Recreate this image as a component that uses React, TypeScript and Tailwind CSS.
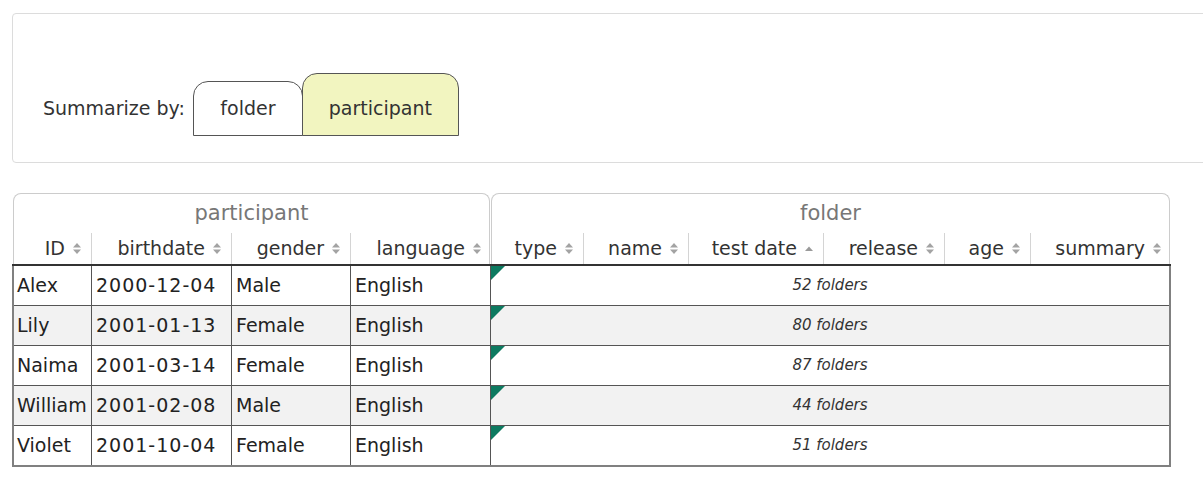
import React from 'react';

type Row = { id: string; birthdate: string; gender: string; language: string; folders: number };

const rows: Row[] = [
  { id: 'Alex', birthdate: '2000-12-04', gender: 'Male', language: 'English', folders: 52 },
  { id: 'Lily', birthdate: '2001-01-13', gender: 'Female', language: 'English', folders: 80 },
  { id: 'Naima', birthdate: '2001-03-14', gender: 'Female', language: 'English', folders: 87 },
  { id: 'William', birthdate: '2001-02-08', gender: 'Male', language: 'English', folders: 44 },
  { id: 'Violet', birthdate: '2001-10-04', gender: 'Female', language: 'English', folders: 51 },
];

const SortIcon: React.FC<{ asc?: boolean }> = ({ asc }) =>
  asc ? (
    <svg width="8" height="10" viewBox="0 0 8 10" className="ml-[8px] shrink-0">
      <path d="M0 7 L4 2.5 L8 7 Z" fill="#9a9a9a" />
    </svg>
  ) : (
    <svg width="8" height="11" viewBox="0 0 8 11" className="ml-[8px] shrink-0">
      <path d="M0 4.5 L4 0 L8 4.5 Z" fill="#a3a3a3" />
      <path d="M0 6.5 L4 11 L8 6.5 Z" fill="#a3a3a3" />
    </svg>
  );

const HeadCell: React.FC<{ label: string; width: string; last?: boolean; asc?: boolean }> = ({
  label,
  width,
  last,
  asc,
}) => (
  <div
    className={`${width} h-full flex items-center justify-end ${last ? 'pr-[8px]' : 'pr-[10px] border-r border-[#d4d4d4]'}`}
  >
    <span>{label}</span>
    <SortIcon asc={asc} />
  </div>
);

export default function App() {
  return (
    <div
      className="w-[1203px] h-[503px] overflow-hidden bg-white text-[#333]"
      style={{ fontFamily: '"DejaVu Sans", "Liberation Sans", sans-serif' }}
    >
      {/* Summarize panel */}
      <div className="ml-[12px] mt-[13px] w-[1200px] h-[150px] border border-[#dcdcdc] rounded-[4px] flex items-end pl-[30px] pb-[26px]">
        <div className="text-[19px] h-[27px] leading-[27px] mb-[14px] mr-[8px]">Summarize by:</div>
        <div className="w-[110px] h-[55px] border border-[#555] rounded-t-[15px] bg-white flex items-end justify-center pb-[13px]">
          <span className="text-[19px] leading-[27px]">folder</span>
        </div>
        <div className="-ml-px w-[157px] h-[63px] border border-[#555] rounded-t-[15px] bg-[#f2f5c0] flex items-end justify-center pb-[13px]">
          <span className="text-[19px] leading-[27px]">participant</span>
        </div>
      </div>

      {/* Table */}
      <div className="ml-[12px] mt-[30px] w-[1159px]">
        {/* Header groups */}
        <div className="flex h-[71px] pl-px">
          <div className="w-[477px] h-full border border-b-0 border-[#ccc] rounded-t-[8px] flex flex-col">
            <div className="h-[39px] flex items-center justify-center text-[21px] text-[#777]">participant</div>
            <div className="flex-1 flex text-[19px]">
              <HeadCell label="ID" width="w-[78px]" />
              <HeadCell label="birthdate" width="w-[140px]" />
              <HeadCell label="gender" width="w-[119px]" />
              <HeadCell label="language" width="w-[138px]" last />
            </div>
          </div>
          <div className="ml-px w-[679px] h-full border border-b-0 border-[#ccc] rounded-t-[8px] flex flex-col">
            <div className="h-[39px] flex items-center justify-center text-[21px] text-[#777]">folder</div>
            <div className="flex-1 flex text-[19px]">
              <HeadCell label="type" width="w-[92px]" />
              <HeadCell label="name" width="w-[105px]" />
              <HeadCell label="test date" width="w-[135px]" asc />
              <HeadCell label="release" width="w-[121px]" />
              <HeadCell label="age" width="w-[86px]" />
              <HeadCell label="summary" width="w-[138px]" last />
            </div>
          </div>
        </div>
        <div className="h-[2px] bg-[#333]" />

        {/* Body */}
        <div className="border-l-2 border-r-2 border-b-2 border-[#808080] text-[19px] text-[#222]">
          {rows.map((r, i) => (
            <div
              key={r.id}
              className={`flex ${i === 0 ? 'h-[39px]' : 'h-[40px] border-t border-[#555]'} ${i % 2 === 1 ? 'bg-[#f2f2f2]' : 'bg-white'}`}
            >
              <div className="w-[78px] border-r border-[#555] pl-[3px] flex items-center whitespace-nowrap">{r.id}</div>
              <div className="w-[140px] border-r border-[#555] pl-[4px] flex items-center tracking-[1px]">{r.birthdate}</div>
              <div className="w-[119px] border-r border-[#555] pl-[4px] flex items-center">{r.gender}</div>
              <div className="w-[140px] border-r border-[#555] pl-[4px] flex items-center">{r.language}</div>
              <div className="relative flex-1 flex items-center justify-center">
                <svg width="14" height="14" viewBox="0 0 14 14" className="absolute left-0 top-0">
                  <path d="M0 0 H14 L0 14 Z" fill="#0d7a60" />
                </svg>
                <span className="italic text-[15px] text-[#333]">{r.folders} folders</span>
              </div>
            </div>
          ))}
        </div>
      </div>
    </div>
  );
}
